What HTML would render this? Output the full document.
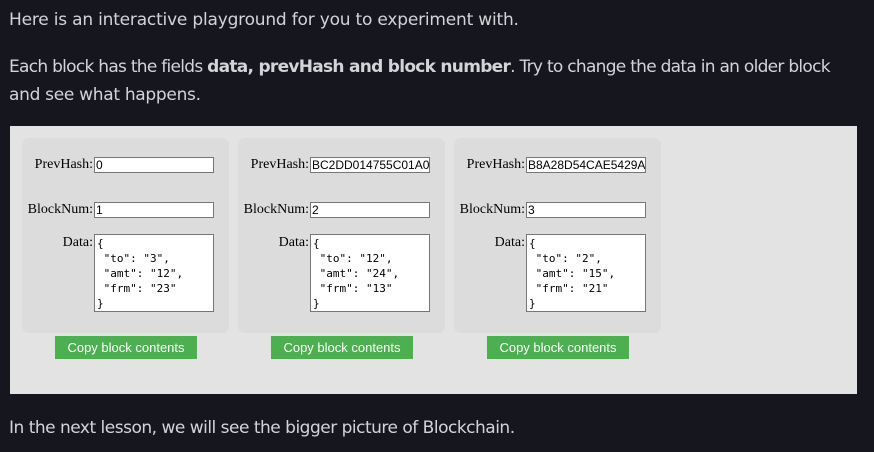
<!DOCTYPE html><html><head><style>
body{margin:0;background:#16161e;width:874px;height:452px;overflow:hidden;font-family:"DejaVu Sans","Liberation Sans",sans-serif;color:#d4d4d8}
p{position:absolute;left:9px;margin:0;font-size:17px;line-height:28px;letter-spacing:-0.35px;white-space:nowrap}
.pg{position:absolute;left:10px;top:126px;width:847px;height:268px;background:#e3e3e3}
.card{position:absolute;top:12px;width:207px;height:195px;background:#dcdcdc;border-radius:7px}
.l{position:absolute;right:136px;font:14px "Liberation Serif",serif;color:#000}
.i{position:absolute;left:72px;width:116px;height:14px;border:1px solid #767676;background:#fff;font:12px "Liberation Sans",sans-serif;color:#000;padding:0 1px;overflow:hidden;white-space:nowrap;line-height:14px}
.t{position:absolute;left:72px;top:96px;border:1px solid #767676;background:#fff;font:11px/15px "DejaVu Sans Mono",monospace;color:#000;white-space:pre;padding:1px 2px;width:114px;height:74px}
.b{position:absolute;top:210px;width:142px;height:23px;background:#4caf50;color:#fff;font:13px/23px "Liberation Sans",sans-serif;text-align:center}
</style></head><body>
<p style="top:6px;letter-spacing:-0.2px">Here is an interactive playground for you to experiment with.</p>
<p style="top:53px;letter-spacing:-0.72px">Each block has the fields <b>data, prevHash and block number</b>. Try to change the data in an older block</p>
<p style="top:81px;letter-spacing:-0.3px">and see what happens.</p>
<div class="pg">
<div class="card" style="left:12px">
<div class="l" style="top:19px">PrevHash:</div><div class="i" style="top:19px">0</div>
<div class="l" style="top:64px">BlockNum:</div><div class="i" style="top:64px">1</div>
<div class="l" style="top:97px">Data:</div><div class="t">{
 "to": "3",
 "amt": "12",
 "frm": "23"
}</div></div>
<div class="b" style="left:45px">Copy block contents</div>
<div class="card" style="left:228px">
<div class="l" style="top:19px">PrevHash:</div><div class="i" style="top:19px">BC2DD014755C01A0</div>
<div class="l" style="top:64px">BlockNum:</div><div class="i" style="top:64px">2</div>
<div class="l" style="top:97px">Data:</div><div class="t">{
 "to": "12",
 "amt": "24",
 "frm": "13"
}</div></div>
<div class="b" style="left:261px">Copy block contents</div>
<div class="card" style="left:444px">
<div class="l" style="top:19px">PrevHash:</div><div class="i" style="top:19px">B8A28D54CAE5429A</div>
<div class="l" style="top:64px">BlockNum:</div><div class="i" style="top:64px">3</div>
<div class="l" style="top:97px">Data:</div><div class="t">{
 "to": "2",
 "amt": "15",
 "frm": "21"
}</div></div>
<div class="b" style="left:477px">Copy block contents</div>
</div>
<p style="top:414px;letter-spacing:-0.5px">In the next lesson, we will see the bigger picture of Blockchain.</p>
</body></html>
